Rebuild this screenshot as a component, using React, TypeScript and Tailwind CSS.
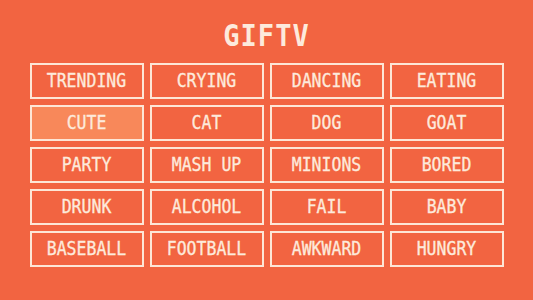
const tags = [
  'TRENDING', 'CRYING', 'DANCING', 'EATING',
  'CUTE', 'CAT', 'DOG', 'GOAT',
  'PARTY', 'MASH UP', 'MINIONS', 'BORED',
  'DRUNK', 'ALCOHOL', 'FAIL', 'BABY',
  'BASEBALL', 'FOOTBALL', 'AWKWARD', 'HUNGRY',
]

export default function App() {
  return (
    <div
      className="w-[533px] h-[300px] bg-[#f26441] text-[#fdeadc] flex flex-col items-center pt-[22px]"
      style={{ fontFamily: '"DejaVu Sans Mono", "Liberation Mono", monospace' }}
    >
      <h1 className="text-[27px] leading-[28px] font-bold tracking-[1px] h-[28px] scale-y-[1.1]">GIFTV</h1>
      <div className="grid grid-cols-4 gap-x-[6px] gap-y-[6px] mt-[13px]">
        {tags.map((tag) => (
          <button
            key={tag}
            className={`w-[114px] h-[36px] border-2 border-[#fde6d6] flex items-center justify-center text-[16.5px] leading-none ${
              tag === 'CUTE' ? 'bg-[#f8885a]' : 'bg-[#f26441]'
            }`}
          >
            <span className="inline-block scale-y-[1.15] [-webkit-text-stroke:0.3px_#fdeadc]">{tag}</span>
          </button>
        ))}
      </div>
    </div>
  )
}
